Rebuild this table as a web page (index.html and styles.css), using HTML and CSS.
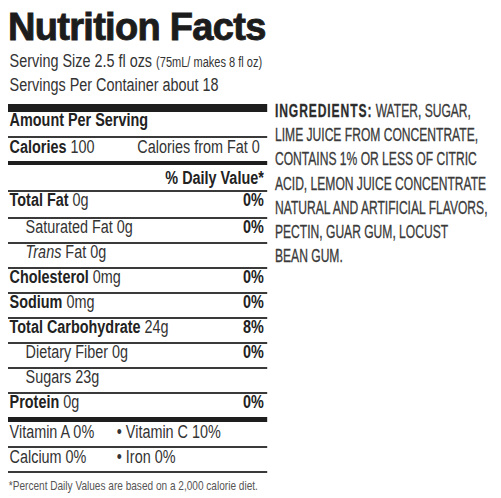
FILE: index.html
```html
<!DOCTYPE html>
<html lang="en">
<head>
  <meta charset="UTF-8">
  <title>Nutrition Facts</title>
  <link rel="stylesheet" href="styles.css">
</head>
<body>
  <div class="page">
    <div class="label">
      <h1>Nutrition Facts</h1>
      <div class="facts">
        <p class="serving first">Serving Size 2.5 fl ozs <span class="small">(75mL/ makes 8 fl oz)</span></p>
        <p class="serving">Servings Per Container about 18</p>
        <div class="bar"></div>
        <div class="row amount"><b>Amount Per Serving</b></div>
        <div class="row calories"><span><b>Calories</b> 100</span><span class="from-fat">Calories from Fat 0</span></div>
        <div class="row dv"><b>% Daily Value*</b></div>
        <div class="row total-fat"><span><b>Total Fat</b> 0g</span><b>0%</b></div>
        <div class="row sub"><span>Saturated Fat 0g</span><b>0%</b></div>
        <div class="row sub"><span><i>Trans</i> Fat 0g</span></div>
        <div class="row"><span><b>Cholesterol</b> 0mg</span><b>0%</b></div>
        <div class="row"><span><b>Sodium</b> 0mg</span><b>0%</b></div>
        <div class="row"><span><b>Total Carbohydrate</b> 24g</span><b>8%</b></div>
        <div class="row sub"><span>Dietary Fiber 0g</span><b>0%</b></div>
        <div class="row sub"><span>Sugars 23g</span></div>
        <div class="row protein"><span><b>Protein</b> 0g</span><b>0%</b></div>
        <div class="row vit vit-top"><span class="vit-left">Vitamin A 0%</span><span>&bull; Vitamin C 10%</span></div>
        <div class="row vit"><span class="vit-left">Calcium 0%</span><span>&bull; Iron 0%</span></div>
        <p class="note">*Percent Daily Values are based on a 2,000 calorie diet.</p>
      </div>
    </div>
    <div class="ingredients">
      <p><b>INGREDIENTS:</b> WATER, SUGAR,</p>
      <p>LIME JUICE FROM CONCENTRATE,</p>
      <p>CONTAINS 1% OR LESS OF CITRIC</p>
      <p>ACID, LEMON JUICE CONCENTRATE</p>
      <p>NATURAL AND ARTIFICIAL FLAVORS,</p>
      <p>PECTIN, GUAR GUM, LOCUST</p>
      <p>BEAN GUM.</p>
    </div>
  </div>
</body>
</html>
```

FILE: styles.css
```css
* {
  margin: 0;
  padding: 0;
  box-sizing: border-box;
}

body {
  background: #fff;
  color: #333;
  font-family: 'Liberation Sans', Arial, sans-serif;
  overflow: hidden;
}

.page {
  display: flex;
  align-items: flex-start;
  padding: 7px 0 0 8px;
}

.label {
  width: 259px;
  flex-shrink: 0;
}

h1 {
  font-size: 38px;
  font-weight: bold;
  line-height: 40px;
  letter-spacing: -0.7px;
  color: #1c1c1c;
  -webkit-text-stroke: 0.9px #1c1c1c;
  white-space: nowrap;
}

/* condensed face: regular face squeezed sideways */
.facts {
  width: 323.75px;
  transform: scaleX(0.8);
  transform-origin: left top;
}

.serving {
  font-size: 18px;
  line-height: 23px;
  padding-left: 2px;
  white-space: nowrap;
}

.serving.first {
  margin-top: 3px;
}

.serving .small {
  font-size: 13.8px;
}

.bar {
  height: 8px;
  background: #1e1e1e;
  margin-top: 7px;
}

.row {
  display: flex;
  justify-content: space-between;
  align-items: flex-start;
  height: 25px;
  padding: 0 4px 0 2px;
  border-bottom: 2px solid #3a3a3a;
  font-size: 18px;
  line-height: 17px;
  white-space: nowrap;
}

.row b {
  color: #222;
}

.amount {
  height: 26px;
}

.calories {
  height: 27px;
  padding-top: 1px;
  border-bottom: 4px solid #1e1e1e;
}

.calories .from-fat {
  padding-right: 5px;
}

.dv {
  height: 27px;
  padding-top: 5px;
  justify-content: flex-end;
}

.total-fat {
  height: 27px;
}

.sub {
  padding-left: 22px;
}

.protein {
  height: 28px;
  border-bottom: 5px solid #1e1e1e;
}

.vit {
  justify-content: flex-start;
  padding-top: 1px;
}

.vit-top {
  height: 26px;
  padding-top: 2px;
}

.vit-left {
  width: 134px;
}

.note {
  font-size: 12.6px;
  line-height: 14px;
  color: #555;
  margin-top: 6px;
  padding-left: 1px;
  white-space: nowrap;
}

.ingredients {
  margin: 92px 0 0 8px;
  font-size: 17.5px;
  line-height: 24.2px;
  color: #3a3a3a;
  -webkit-text-stroke: 0.3px #3a3a3a;
  white-space: nowrap;
  transform: scaleX(0.69);
  transform-origin: left top;
}

.ingredients b {
  color: #2a2a2a;
  letter-spacing: 1.3px;
}
```
